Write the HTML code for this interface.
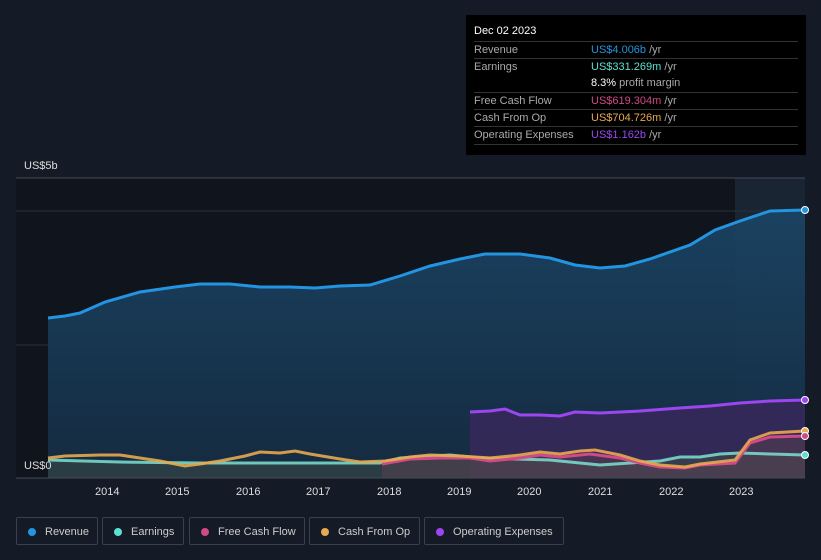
<!DOCTYPE html>
<html><head><style>
body{margin:0;width:821px;height:560px;background:#151b26;font-family:"Liberation Sans",sans-serif;overflow:hidden;position:relative}
.tt{position:absolute;left:466px;top:15px;width:340px;height:140px;background:#000;color:#fff;font-size:11px}
.tt .h{position:absolute;left:8px;top:10px;font-size:11px}
.row{position:absolute;left:8px;width:324px;border-top:1px solid #333;height:17px;line-height:17px;color:#aaa}
.row span{position:absolute;left:117px}
.leg{position:absolute;top:517px;height:28px;border:1px solid #3a404c;border-radius:2px;color:#ccc;font-size:11px;line-height:28px;box-sizing:border-box;padding-left:28px}
.leg i{position:absolute;left:11px;top:10px;width:8px;height:8px;border-radius:50%}
.ax{position:absolute;top:486px;color:#ddd;font-size:11px}
</style></head><body>
<svg width="821" height="560" style="position:absolute;left:0;top:0">
<defs><linearGradient id="rg" x1="0" y1="0" x2="0" y2="1"><stop offset="0" stop-color="#1a4566" stop-opacity=".9"/><stop offset="1" stop-color="#152a3f"/></linearGradient></defs>
<rect x="16" y="178" width="789" height="300" fill="#10141c"/>
<rect x="735" y="178" width="70" height="300" fill="#1a2533"/>
<line x1="16" y1="178" x2="805" y2="178" stroke="#444a55"/>
<line x1="16" y1="211" x2="805" y2="211" stroke="#2a303a"/>
<line x1="16" y1="345" x2="805" y2="345" stroke="#2a303a"/>
<polygon fill="url(#rg)" points="48,478 48,318 65,316 80,313 105,302 140,292 175,287 200,284 230,284 260,287 290,287 315,288 340,286 370,285 400,276 430,266 460,259 485,254 520,254 550,258 575,265 600,268 625,266 650,259 690,245 715,230 740,221 770,211 805,210 805,478"/>
<polyline fill="none" stroke="#2394e0" stroke-width="3" points="48,318 65,316 80,313 105,302 140,292 175,287 200,284 230,284 260,287 290,287 315,288 340,286 370,285 400,276 430,266 460,259 485,254 520,254 550,258 575,265 600,268 625,266 650,259 690,245 715,230 740,221 770,211 805,210"/>
<polygon fill="#35295a" opacity=".9" points="470,478 470,412 490,411 505,409 520,415 540,415 560,416 575,412 600,413 640,411 680,408 710,406 740,403 770,401 805,400 805,478"/>
<polyline fill="none" stroke="#9b46f0" stroke-width="3" points="470,412 490,411 505,409 520,415 540,415 560,416 575,412 600,413 640,411 680,408 710,406 740,403 770,401 805,400"/>
<polygon fill="#3a4a48" opacity=".6" points="48,478 48,460 120,462 200,463 380,463 400,458 450,455 480,458 550,460 600,465 630,463 660,461 680,457 700,457 720,454 740,453 770,454 805,455 805,478"/>
<polygon fill="#5a3f50" opacity=".5" points="382,478 382,464 410,459 440,458 470,458 490,461 520,458 540,455 560,457 590,454 620,458 640,463 660,467 685,468 700,465 735,463 750,443 770,437 805,436 805,478"/>
<polyline fill="none" stroke="#7ee0d0" stroke-width="3" opacity=".85" points="48,460 120,462 200,463 380,463 400,458 450,455 480,458 550,460 600,465 630,463 660,461 680,457 700,457 720,454 740,453 770,454 805,455"/>
<polyline fill="none" stroke="#d04a86" stroke-width="3" points="382,464 410,459 440,458 470,458 490,461 520,458 540,455 560,457 590,454 620,458 640,463 660,467 685,468 700,465 735,463 750,443 770,437 805,436"/>
<polyline fill="none" stroke="#e8a94f" stroke-width="3" opacity=".9" points="48,458 65,456 100,455 120,455 140,458 160,461 185,466 200,464 220,461 245,456 260,452 280,453 295,451 310,454 340,459 360,462 385,461 410,457 430,455 460,456 490,458 520,455 540,452 560,454 580,451 595,450 620,455 640,461 660,465 685,467 700,464 735,460 750,440 770,433 805,431"/>
<line x1="16" y1="478" x2="805" y2="478" stroke="#444a55"/>
<circle cx="805" cy="210" r="3.5" fill="#2394e0" stroke="#fff"/>
<circle cx="805" cy="400" r="3.5" fill="#9b46f0" stroke="#fff"/>
<circle cx="805" cy="431" r="3.5" fill="#e8a94f" stroke="#fff"/>
<circle cx="805" cy="436" r="3.5" fill="#d04a86" stroke="#fff"/>
<circle cx="805" cy="455" r="3.5" fill="#5ee0d0" stroke="#fff"/>
</svg>
<div style="position:absolute;left:24px;top:160px;color:#ddd;font-size:11px">US$5b</div>
<div style="position:absolute;left:24px;top:460px;color:#ddd;font-size:11px">US$0</div>
<div class="ax" style="left:95px">2014</div><div class="ax" style="left:165px">2015</div><div class="ax" style="left:236px">2016</div><div class="ax" style="left:306px">2017</div><div class="ax" style="left:377px">2018</div><div class="ax" style="left:447px">2019</div><div class="ax" style="left:517px">2020</div><div class="ax" style="left:588px">2021</div><div class="ax" style="left:659px">2022</div><div class="ax" style="left:729px">2023</div>
<div class="tt">
<div class="h">Dec 02 2023</div>
<div class="row" style="top:26px">Revenue<span><b style="color:#2394e0;font-weight:normal">US$4.006b</b> /yr</span></div>
<div class="row" style="top:43px">Earnings<span><b style="color:#5ee0d0;font-weight:normal">US$331.269m</b> /yr</span></div>
<div class="row" style="top:60px;border:0"><span><b style="color:#fff;font-weight:normal">8.3%</b> profit margin</span></div>
<div class="row" style="top:77px">Free Cash Flow<span><b style="color:#d04a86;font-weight:normal">US$619.304m</b> /yr</span></div>
<div class="row" style="top:94px">Cash From Op<span><b style="color:#e8a94f;font-weight:normal">US$704.726m</b> /yr</span></div>
<div class="row" style="top:111px;border-bottom:1px solid #333">Operating Expenses<span><b style="color:#9b46f0;font-weight:normal">US$1.162b</b> /yr</span></div>
</div>
<div class="leg" style="left:16px;width:82px"><i style="background:#2394e0"></i>Revenue</div>
<div class="leg" style="left:102px;width:82px"><i style="background:#5ee0d0"></i>Earnings</div>
<div class="leg" style="left:189px;width:116px"><i style="background:#d04a86"></i>Free Cash Flow</div>
<div class="leg" style="left:309px;width:111px"><i style="background:#e8a94f"></i>Cash From Op</div>
<div class="leg" style="left:424px;width:140px"><i style="background:#9b46f0"></i>Operating Expenses</div>
</body></html>
